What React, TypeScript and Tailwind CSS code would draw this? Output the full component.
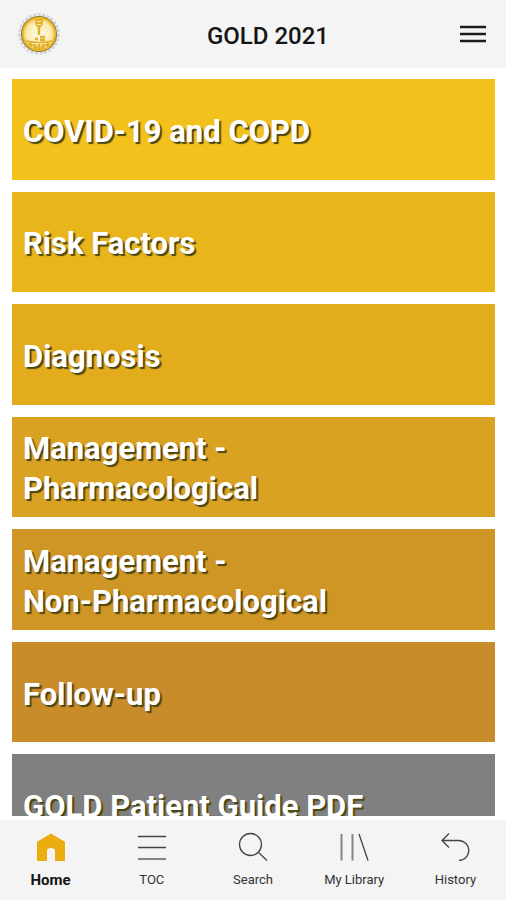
import type { ReactNode } from "react";

const topics = [
  { lines: ["COVID-19 and COPD"], color: "bg-[#f3c11b]" },
  { lines: ["Risk Factors"], color: "bg-[#e8b61b]" },
  { lines: ["Diagnosis"], color: "bg-[#e2ac1c]" },
  { lines: ["Management -", "Pharmacological"], color: "bg-[#d9a222]" },
  { lines: ["Management -", "Non-Pharmacological"], color: "bg-[#cf9626]" },
  { lines: ["Follow-up"], color: "bg-[#c88c2b]" },
  { lines: ["GOLD Patient Guide PDF"], color: "bg-[#808080]" },
];

function Icon({ children }: { children: ReactNode }) {
  return (
    <svg viewBox="0 0 32 32" className="size-8" fill="none" stroke="#444" strokeWidth="1.3" aria-hidden="true">
      {children}
    </svg>
  );
}

const tabs = [
  {
    label: "Home",
    active: true,
    icon: <path d="M16 1.5 L29.5 9.500 Q30 10 30 10.600 V28 Q30 29 29 29 H20 V19 Q20 16 16 16 Q12 16 12 19 V29 H3 Q2 29 2 28 V10.600 Q2 10 2.500 9.500 Z" fill="#ebad0f" stroke="none" />,
  },
  {
    label: "TOC",
    icon: (
      <>
        <path d="M2 4.500H30M2 15.500H30" />
        <path d="M2 27H30" stroke="#858585" strokeWidth="2" />
      </>
    ),
  },
  {
    label: "Search",
    icon: (
      <>
        <circle cx="13.500" cy="12.500" r="11" />
        <path d="M21.500 20.500 L30 28.500" />
      </>
    ),
  },
  {
    label: "My Library",
    icon: (
      <>
        <path d="M3.500 2V28.500M14.500 2V28.500" stroke="#858585" strokeWidth="2" />
        <path d="M21 2L30 28.500" />
      </>
    ),
  },
  { label: "History", icon: <path d="M10 1.500L3 8.500L10 15.500M3 8.500H19.500A10 10 0 0 1 20 28.500" /> },
];

function Emblem() {
  return (
    <svg viewBox="0 0 42 42" className="size-[42px]" role="img" aria-label="GOLD">
      <defs>
        <radialGradient id="coin">
          <stop offset="0" stopColor="#fffbea" />
          <stop offset="0.7" stopColor="#fbeab0" />
          <stop offset="1" stopColor="#edbd2c" />
        </radialGradient>
      </defs>
      <circle cx="21" cy="21" r="19.500" fill="none" stroke="#d0d2d6" strokeWidth="2.500" strokeDasharray="3 1.500" />
      <circle cx="21" cy="21" r="17.500" fill="url(#coin)" stroke="#8f7d3e" strokeWidth="1.200" />
      <circle cx="21" cy="21" r="16.200" fill="none" stroke="#e7b31f" strokeWidth="1.500" />
      <g fill="none" stroke="#e3b02a">
        <path d="M17 7h8M18 10h6" strokeWidth="2" />
        <path d="M18 8v3l2 3M24 8v3l-2 3" strokeWidth="1.500" />
        <path d="M21 12v10" strokeWidth="2.500" />
        <path d="M17 26h3M22 24h5M22 27h5" strokeWidth="2.500" />
        <path d="M8 28q13 3 26 0" strokeWidth="1.500" />
        <path d="M11 30l3 3M16 31l2 5M21 31v6M26 31l-2 5M31 30l-3 3" strokeWidth="3" />
      </g>
    </svg>
  );
}

export default function App() {
  return (
    <div className="flex h-screen flex-col bg-white font-[Roboto,sans-serif]">
      <header className="flex h-[68px] shrink-0 items-center bg-[#f4f4f4] px-[18px]">
        <Emblem />
        <h1 className="flex-1 pt-1 pl-[18px] text-center text-2xl font-medium text-[#151515]">GOLD 2021</h1>
        <button type="button" aria-label="Menu">
          <svg viewBox="0 0 30 24" className="h-6 w-[30px]" fill="none" stroke="#1c1c1c" strokeWidth="2.500" aria-hidden="true">
            <path d="M2 5H28M2 12H28M2 19H28" />
          </svg>
        </button>
      </header>

      <main className="mb-1 min-h-0 flex-1 overflow-hidden pt-[11px] pr-[11px] pl-3">
        <div className="grid h-[776px] auto-rows-fr gap-3">
          {topics.map((topic) => (
            <button
              key={topic.lines.join(" ")}
              type="button"
              className={`flex flex-col justify-center px-[11px] pt-[5px] text-left text-[31px] leading-10 font-bold text-white [text-shadow:2px_2px_1px_#4a4614] ${topic.color}`}
            >
              {topic.lines.map((line) => (
                <span key={line}>{line}</span>
              ))}
            </button>
          ))}
        </div>
      </main>

      <nav aria-label="Main" className="grid h-20 shrink-0 grid-cols-5 bg-[#f4f4f4] pt-3">
        {tabs.map((tab) => (
          <a
            key={tab.label}
            href={`#${tab.label}`}
            aria-current={tab.active ? "page" : undefined}
            className={`flex flex-col items-center gap-2 leading-4 ${tab.active ? "text-[15px] font-bold text-[#151515]" : "text-[13px] text-[#333]"}`}
          >
            <Icon>{tab.icon}</Icon>
            <span>{tab.label}</span>
          </a>
        ))}
      </nav>
    </div>
  );
}
